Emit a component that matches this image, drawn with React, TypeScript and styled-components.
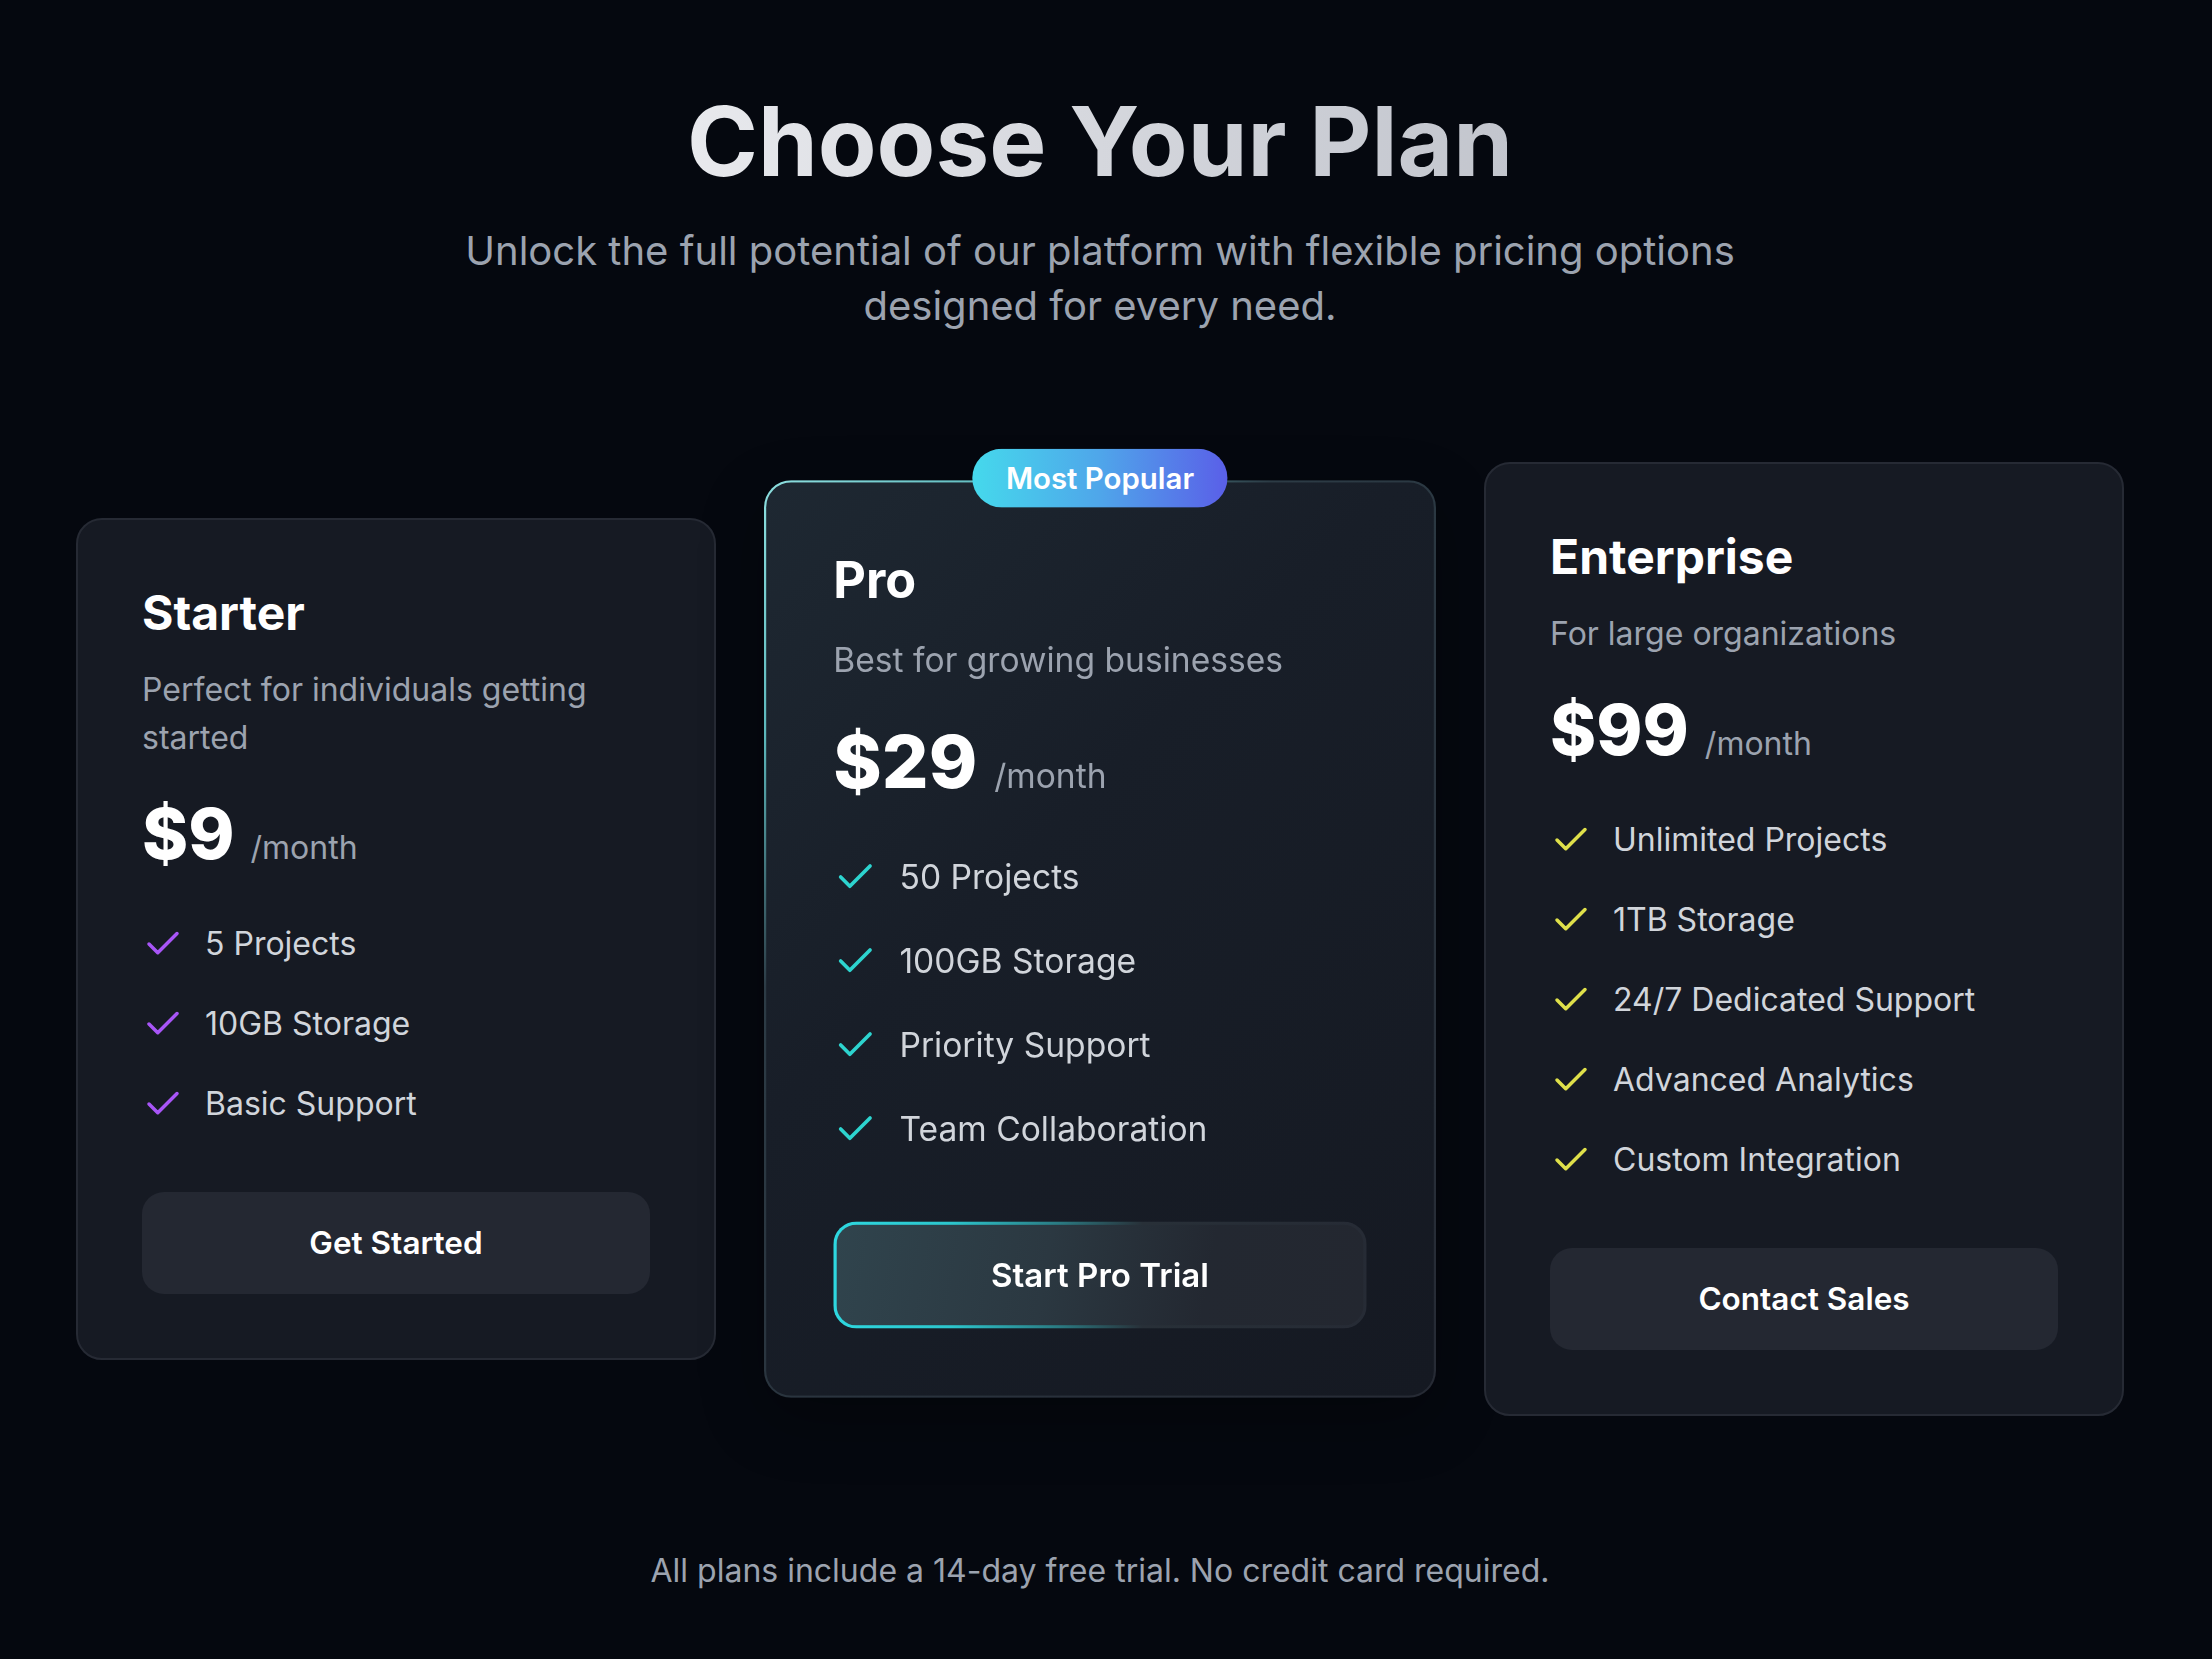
import styled, { createGlobalStyle } from "styled-components";

const GlobalStyle = createGlobalStyle`
  html, body {
    margin: 0;
    padding: 0;
    background: #05080f;
  }
  body {
    font-family: Inter, "Noto Sans", "Liberation Sans", sans-serif;
    -webkit-font-smoothing: antialiased;
  }
  * { box-sizing: border-box; }
`;

const Page = styled.main`
  min-height: 1659px;
  background: #05080f;
  display: flex;
  flex-direction: column;
  align-items: center;
  padding: 93px 12px 0 0;
`;

const Heading = styled.h1`
  margin: 0 0 34px;
  font-size: 96px;
  line-height: 1;
  font-weight: 700;
  background: linear-gradient(90deg, #e8e9ed, #c2c5cd);
  -webkit-background-clip: text;
  background-clip: text;
  color: transparent;
`;

const Subtitle = styled.p`
  margin: 0;
  max-width: 1320px;
  text-align: center;
  font-size: 40px;
  line-height: 55px;
  color: #9ca3af;
`;

const Cards = styled.section`
  margin-top: 129px;
  display: flex;
  align-items: center;
  justify-content: center;
  gap: 64px;
`;

const Card = styled.div<{ $featured?: boolean }>`
  position: relative;
  width: 640px;
  padding: 64px;
  border-radius: 26px;
  border: 2px solid #262a34;
  background: #161a23;
  ${(p) =>
    p.$featured &&
    `
    transform: scale(1.05);
    border: 2.5px solid transparent;
    background:
      linear-gradient(135deg, #1e2832 0%, #181e28 40%, #151922 100%) padding-box,
      linear-gradient(135deg, #8ee0e0 0%, #5cb8bc 16%, #2c3b45 32%, #262a34 100%) border-box;
    box-shadow: 0 20px 60px rgba(0, 0, 0, 0.3);
  `}
`;

const Badge = styled.div`
  position: absolute;
  top: -32px;
  left: 50%;
  transform: translateX(-50%);
  padding: 8px 32px;
  border-radius: 999px;
  background: linear-gradient(90deg, #45d9ec 0%, #4fa6ea 50%, #5a5fe8 100%);
  color: #ffffff;
  font-size: 28px;
  line-height: 40px;
  font-weight: 600;
  white-space: nowrap;
`;

const PlanName = styled.h3`
  margin: 0 0 24px;
  font-size: 48px;
  line-height: 1.2;
  font-weight: 700;
  color: #ffffff;
`;

const PlanDesc = styled.p`
  margin: 0 0 36px;
  font-size: 32px;
  line-height: 48px;
  color: #9ca3af;
`;

const PriceRow = styled.div`
  display: flex;
  align-items: baseline;
  margin-bottom: 50px;
`;

const Amount = styled.span`
  font-size: 70px;
  line-height: 72px;
  font-weight: 800;
  color: #ffffff;
`;

const Period = styled.span`
  margin-left: 16px;
  font-size: 32px;
  color: #9ca3af;
`;

const Features = styled.ul`
  list-style: none;
  margin: 0 0 64px;
  padding: 0;
  display: flex;
  flex-direction: column;
  gap: 32px;
`;

const Feature = styled.li`
  display: flex;
  align-items: center;
  gap: 21px;
  font-size: 32px;
  line-height: 48px;
  color: #d1d5db;
`;

const Button = styled.button<{ $featured?: boolean }>`
  width: 100%;
  padding: 32px;
  border-radius: 22px;
  border: none;
  background: #242832;
  color: #ffffff;
  font-family: inherit;
  font-size: 31.5px;
  line-height: 38px;
  font-weight: 600;
  cursor: pointer;
  ${(p) =>
    p.$featured &&
    `
    padding: 29px 32px;
    border: 3px solid transparent;
    background:
      linear-gradient(100deg, #30444d 0%, #2b3841 40%, #232831 70%, #232730 100%) padding-box,
      linear-gradient(90deg, #2ed8e0 0%, #2cc6cd 22%, #2a7c84 42%, #283038 58%, #262b35 100%) border-box;
  `}
`;

const Footer = styled.p`
  margin: 132px 0 0;
  font-size: 32px;
  line-height: 46px;
  color: #9ca3af;
`;

function Check({ color }: { color: string }) {
  return (
    <svg width="42" height="42" viewBox="0 0 24 24" fill="none" stroke={color} strokeWidth="2" strokeLinecap="round" strokeLinejoin="round" style={{ flexShrink: 0 }}>
      <path d="M20 6 9 17l-5-5" />
    </svg>
  );
}

type Plan = {
  name: string;
  desc: string;
  price: string;
  features: string[];
  cta: string;
  check: string;
  featured?: boolean;
};

const plans: Plan[] = [
  {
    name: "Starter",
    desc: "Perfect for individuals getting started",
    price: "$9",
    features: ["5 Projects", "10GB Storage", "Basic Support"],
    cta: "Get Started",
    check: "#a855f7",
  },
  {
    name: "Pro",
    desc: "Best for growing businesses",
    price: "$29",
    features: ["50 Projects", "100GB Storage", "Priority Support", "Team Collaboration"],
    cta: "Start Pro Trial",
    check: "#2dd4cf",
    featured: true,
  },
  {
    name: "Enterprise",
    desc: "For large organizations",
    price: "$99",
    features: ["Unlimited Projects", "1TB Storage", "24/7 Dedicated Support", "Advanced Analytics", "Custom Integration"],
    cta: "Contact Sales",
    check: "#dfe04a",
  },
];

export default function App() {
  return (
    <>
      <GlobalStyle />
      <Page>
        <Heading>Choose Your Plan</Heading>
        <Subtitle>
          Unlock the full potential of our platform with flexible pricing options designed for every need.
        </Subtitle>
        <Cards>
          {plans.map((plan) => (
            <Card key={plan.name} $featured={plan.featured}>
              {plan.featured && <Badge>Most Popular</Badge>}
              <PlanName>{plan.name}</PlanName>
              <PlanDesc>{plan.desc}</PlanDesc>
              <PriceRow>
                <Amount>{plan.price}</Amount>
                <Period>/month</Period>
              </PriceRow>
              <Features>
                {plan.features.map((f) => (
                  <Feature key={f}>
                    <Check color={plan.check} />
                    {f}
                  </Feature>
                ))}
              </Features>
              <Button $featured={plan.featured}>{plan.cta}</Button>
            </Card>
          ))}
        </Cards>
        <Footer>All plans include a 14-day free trial. No credit card required.</Footer>
      </Page>
    </>
  );
}
